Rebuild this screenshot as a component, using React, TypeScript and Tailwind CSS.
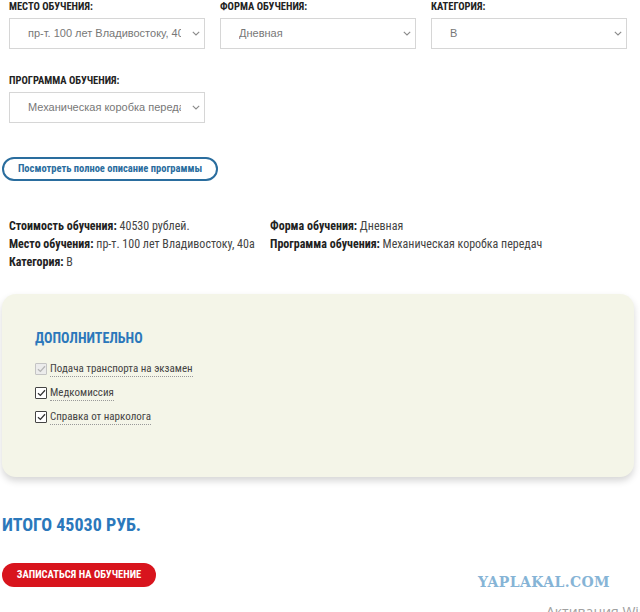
import React from "react";

const cond = "font-['Roboto',sans-serif] [font-stretch:75%]";

function Chevron() {
  return (
    <svg width="8" height="5" viewBox="0 0 8 5" className="shrink-0">
      <path d="M0.8 0.8 L4 4 L7.2 0.8" fill="none" stroke="#8a8a8a" strokeWidth="1.1" />
    </svg>
  );
}

function Select({ value, textW }: { value: string; textW: number }) {
  return (
    <div className="flex h-[31px] w-[196px] items-center border border-[#d6d6d6] bg-white pl-[18px] pr-[3px]">
      <span
        className="overflow-hidden whitespace-nowrap text-[11px] text-[#777] font-['Liberation_Sans',Arial,sans-serif]"
        style={{ width: textW }}
      >
        {value}
      </span>
      <div className="flex flex-1 justify-end pr-[1px]">
        <Chevron />
      </div>
    </div>
  );
}

function Field({ label, value }: { label: string; value: string }) {
  return (
    <div className="flex w-[196px] flex-col">
      <div className={`h-[14px] text-[10.5px] font-bold leading-[14px] text-[#222] ${cond}`}>{label}</div>
      <div className="mt-[4px]">
        <Select value={value} textW={153} />
      </div>
    </div>
  );
}

function Check({ disabled, label }: { disabled?: boolean; label: string }) {
  return (
    <div className="flex h-[24px] items-center gap-[3px]">
      <div
        className={`flex h-[12px] w-[12px] items-center justify-center rounded-[1px] border ${
          disabled ? "border-[#c4c4c4] bg-[#ececec]" : "border-[#444] bg-white"
        }`}
      >
        <svg width="9" height="8" viewBox="0 0 9 8">
          <path
            d="M1 4.2 L3.4 6.4 L8 1.2"
            fill="none"
            stroke={disabled ? "#b5b5b5" : "#333"}
            strokeWidth="1.3"
          />
        </svg>
      </div>
      <span
        className={`border-b border-dotted border-[#999] pb-[1px] text-[11px] leading-[13px] text-[#444] font-['Roboto',sans-serif] [font-stretch:82%]`}
      >
        {label}
      </span>
    </div>
  );
}

export default function App() {
  return (
    <div className="relative h-[612px] w-[640px] overflow-hidden bg-white font-['Roboto',sans-serif]">
      <div className="flex gap-[15px] pl-[9px]">
        <Field label="МЕСТО ОБУЧЕНИЯ:" value="пр-т. 100 лет Владивостоку, 40а" />
        <Field label="ФОРМА ОБУЧЕНИЯ:" value="Дневная" />
        <Field label="КАТЕГОРИЯ:" value="B" />
      </div>

      <div className="mt-[25px] pl-[9px]">
        <div className={`h-[14px] text-[10.5px] font-bold leading-[14px] text-[#222] ${cond}`}>ПРОГРАММА ОБУЧЕНИЯ:</div>
        <div className="mt-[4px]">
          <Select value="Механическая коробка передач" textW={153} />
        </div>
      </div>

      <div className="mt-[34px] pl-[2px]">
        <div
          className={`flex h-[24px] w-[216px] items-center justify-center rounded-full border-2 border-[#2a6d9e] text-[10.5px] font-bold text-[#2a6d9e] ${cond}`}
        >
          Посмотреть полное описание программы
        </div>
      </div>

      <div className="mt-[36px] flex pl-[9px] text-[12px] leading-[18px] text-[#444] [font-stretch:87%]">
        <div className="w-[261px]">
          <div>
            <b className="text-[#222]">Стоимость обучения:</b> 40530 рублей.
          </div>
          <div>
            <b className="text-[#222]">Место обучения:</b> пр-т. 100 лет Владивостоку, 40а
          </div>
          <div>
            <b className="text-[#222]">Категория:</b> B
          </div>
        </div>
        <div>
          <div>
            <b className="text-[#222]">Форма обучения:</b> Дневная
          </div>
          <div>
            <b className="text-[#222]">Программа обучения:</b> Механическая коробка передач
          </div>
        </div>
      </div>

      <div className="mt-[23px] pl-[2px] pr-[6px]">
        <div className="h-[183px] rounded-[14px] bg-[#f4f5e8] pl-[33px] pt-[35px] shadow-[0_4px_7px_rgba(0,0,0,0.16)]">
          <div className={`text-[14px] font-bold leading-[18px] text-[#2b78bb] ${cond}`}>ДОПОЛНИТЕЛЬНО</div>
          <div className="mt-[10px] flex flex-col">
            <Check disabled label="Подача транспорта на экзамен" />
            <Check label="Медкомиссия" />
            <Check label="Справка от нарколога" />
          </div>
        </div>
      </div>

      <div className={`mt-[37px] pl-[2px] text-[18px] font-bold leading-[22px] text-[#2b78bb] ${cond}`}>
        ИТОГО 45030 РУБ.
      </div>

      <div className="mt-[27px] pl-[2px]">
        <div
          className={`flex h-[24px] w-[154px] items-center justify-center rounded-full bg-[#d8141d] text-[10.5px] font-bold text-white ${cond}`}
        >
          ЗАПИСАТЬСЯ НА ОБУЧЕНИЕ
        </div>
      </div>

      <div className="absolute left-[478px] top-[574px] font-['DejaVu_Serif',serif] text-[14px] font-bold leading-[16px] tracking-[0.4px] text-[#86b4d6]">
        YAPLAKAL.COM
      </div>
      <div className="absolute left-[546px] top-[603px] whitespace-nowrap font-['Open_Sans',sans-serif] text-[14px] leading-[18px] text-[#a0a0a0]">
        Активация Windows
      </div>
    </div>
  );
}
